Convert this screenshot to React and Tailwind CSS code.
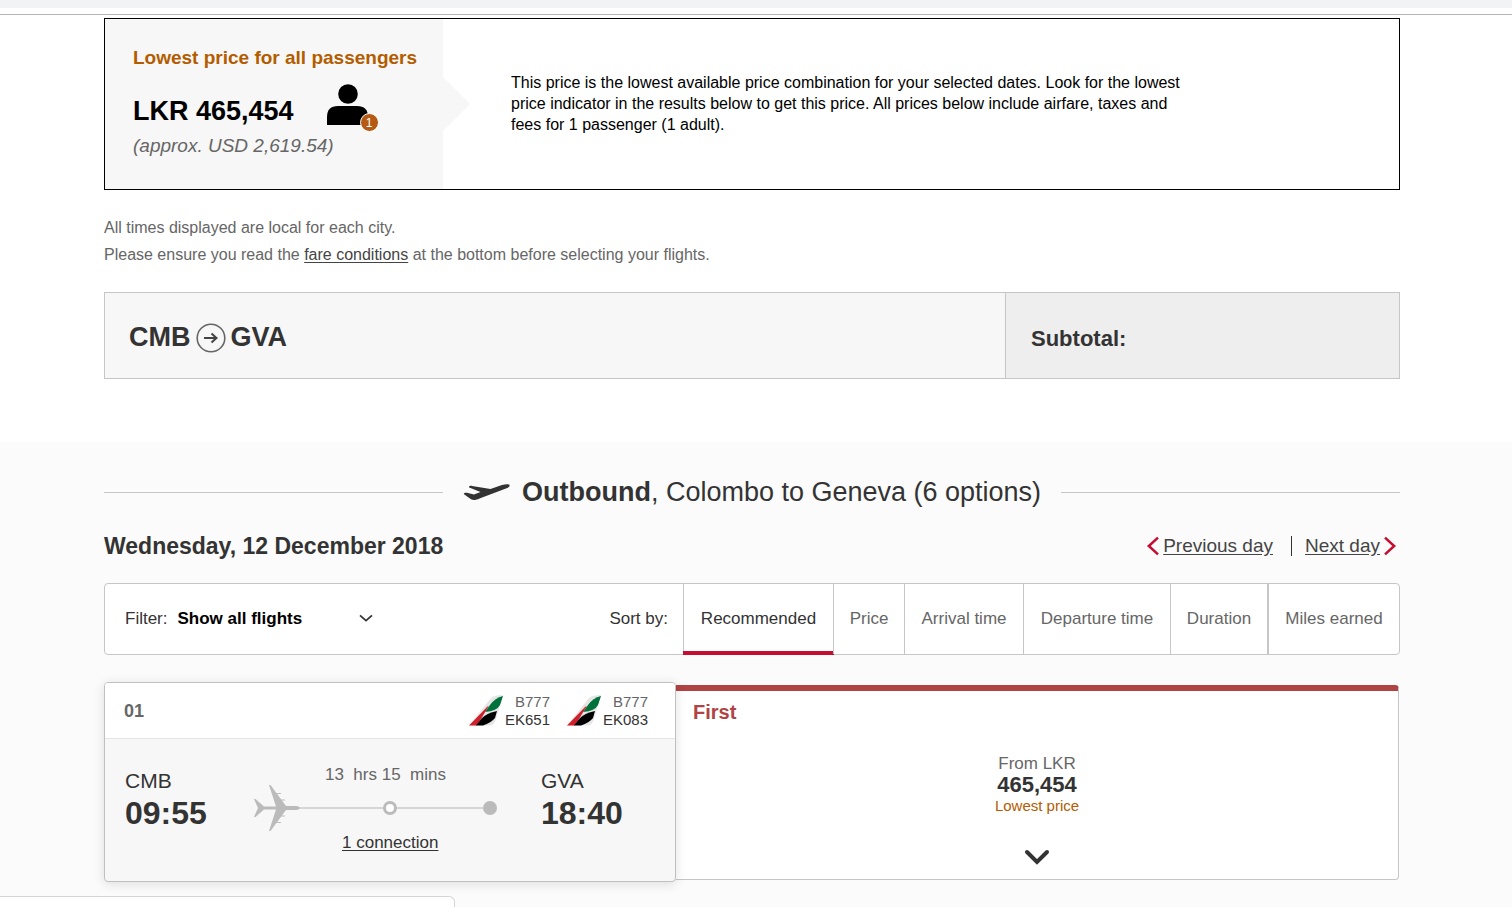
import clsx from 'clsx'

const sortOptions = ['Recommended', 'Price', 'Arrival time', 'Departure time', 'Duration', 'Miles earned']

const segments = [
    { aircraft: 'B777', number: 'EK651' },
    { aircraft: 'B777', number: 'EK083' }
]

function PassengerIcon() {
    return (
        <svg className="w-[52px] h-12" viewBox="0 0 52 48" aria-hidden="true">
            <circle cx="21" cy="10" r="9.8" fill="#000" />
            <path d="M0 41V33Q0 22 11 22H30Q41 22 41 33V41Z" fill="#000" />
        </svg>
    )
}

function CircleArrow() {
    return (
        <svg className="w-[30px] h-[30px]" viewBox="0 0 30 30" fill="none" aria-hidden="true">
            <circle cx="15" cy="15" r="13.8" stroke="#666" strokeWidth="1.6" />
            <path d="M8 15H20.5M15.5 10.5L20.5 15L15.5 19.5" stroke="#444" strokeWidth="2" />
        </svg>
    )
}

function TakeoffIcon() {
    return (
        <svg className="w-[47px] h-[18px]" viewBox="0 0 47 18" fill="#333" aria-hidden="true">
            <path d="M1 10.2C.2 9.2 2 8.4 4 8.7L11 10.5L17.5 8L6.2 3.6C5.2 2.6 7 1.6 9 1.9L27.5 5L39 .9C43 -.1 46.3 -.1 46.6 1.2C46.8 2.6 45.6 3.4 43.6 4.2L16.5 14.4C13 16 10.5 16.4 8 15.2Z" />
        </svg>
    )
}

function TailLogo() {
    return (
        <svg className="w-[34px] h-[31px]" viewBox="0 0 34 31" aria-hidden="true">
            <path d="M0 30.5L22 3Q25 0 34 0L27 24Q25 30 21 30.5Z" fill="#e6e6e6" />
            <path d="M34 1Q26 3 21 10L16 17Q28 16 31 10Z" fill="#00713a" />
            <path d="M0 30.5L18 12Q21 9.5 18 14L8 30.5Z" fill="#cf202c" />
            <path d="M7 30.5L13 23Q18 18 28 16L26 23Q22 28 14 30.5Z" fill="#000" />
        </svg>
    )
}

function PlaneIcon() {
    return (
        <svg className="w-[46px] h-[46px] shrink-0" viewBox="0 0 46 46" fill="#bbb" stroke="#bbb" aria-hidden="true">
            <path stroke="none" d="M0 14L1.5 14L10 21.4H22L15 0H16.5L32 21H42Q46 21.4 46 23Q46 24.6 42 25H32L16.5 46H15L22 24.6H10L1.5 32H0L4 23Z" />
            <path d="M22 8.5H27M26 15H31M22 37.5H27M26 31H31" strokeWidth="1.2" />
        </svg>
    )
}

function Chevron({ d, className, width = 3 }) {
    return (
        <svg className={className} viewBox="0 0 24 24" fill="none" stroke="currentColor" strokeWidth={width} aria-hidden="true">
            <path d={d} />
        </svg>
    )
}

function PriceSummary() {
    return (
        <section className="flex h-[172px] border border-black bg-white">
            <div className="relative w-[338px] shrink-0 bg-[#f7f7f7] pl-7 pt-[25px]">
                <h2 className="text-[19px] leading-7 font-bold text-[#b35c00]">Lowest price for all passengers</h2>
                <div className="mt-3 flex h-12 gap-[33px]">
                    <p className="pt-[9px] text-[27px] leading-9 font-bold">LKR 465,454</p>
                    <div className="relative">
                        <PassengerIcon />
                        <span className="absolute right-0 bottom-0 flex h-[19px] w-[19px] items-center justify-center rounded-full border border-white bg-[#b45a14] text-[12px] text-white">
                            1
                        </span>
                    </div>
                </div>
                <p className="text-[19px] leading-7 italic text-[#666]">(approx. USD 2,619.54)</p>
                <svg className="absolute top-[58px] left-full h-[54px] w-[27px]" viewBox="0 0 27 54" aria-hidden="true">
                    <path d="M0 0L27 27L0 54Z" fill="#f7f7f7" />
                </svg>
            </div>
            <p className="max-w-[750px] pt-[53px] pl-[68px] text-[16px] leading-[21px]">
                This price is the lowest available price combination for your selected dates. Look for the lowest price indicator in the results below to get this price. All prices below include airfare, taxes and fees for 1 passenger (1 adult).
            </p>
        </section>
    )
}

function RouteBar() {
    return (
        <section className="mt-6 flex h-[87px] border border-[#c6c6c6] bg-[#f7f7f7] font-bold text-[#333]">
            <h2 className="flex flex-1 items-center gap-[5px] pl-6 pt-1 text-[27px]">
                <span>CMB</span>
                <CircleArrow />
                <span>GVA</span>
            </h2>
            <div className="flex w-[394px] items-center border-l border-[#c6c6c6] bg-[#eee] pl-[25px] pt-[6px] text-[22px]">Subtotal:</div>
        </section>
    )
}

function SortBar() {
    return (
        <div className="mt-[21px] flex h-[72px] rounded-[4px] border border-[#c6c6c6] bg-white text-[#333]">
            <div className="flex flex-1 items-center pl-5 text-[17px]">
                <label htmlFor="filter">Filter:</label>
                <div className="relative ml-1.5">
                    <select id="filter" className="w-[204px] appearance-none bg-transparent pl-1 font-bold text-black">
                        <option>Show all flights</option>
                    </select>
                    <Chevron d="M3 8L12 16L21 8" width={2.6} className="pointer-events-none absolute top-1 right-1 h-4 w-4" />
                </div>
                <span className="ml-auto pr-[15px]">Sort by:</span>
            </div>
            <div className="grid grid-cols-[150px_71px_119px_147px_97px_132px] text-[17px]">
                {sortOptions.map((option, i) => (
                    <button
                        key={option}
                        className={clsx(
                            'relative border-l border-[#c6c6c6]',
                            i === 0 ? 'text-[#333]' : 'text-[#666]',
                            i === 5 && 'border-l-2'
                        )}
                    >
                        {option}
                        {i === 0 && <span className="absolute -bottom-px -left-px h-1 w-[151px] bg-[#c60c30]" />}
                    </button>
                ))}
            </div>
        </div>
    )
}

function FlightCard() {
    return (
        <article className="mt-[27px] flex items-start">
            <div className="relative h-[200px] w-[572px] shrink-0 rounded-[4px] border border-[#c0c0c0] bg-[#f7f7f7] shadow-[0_2px_12px_rgba(0,0,0,0.12)]">
                <header className="flex h-14 items-center rounded-t-[3px] border-b border-[#e4e4e4] bg-white pr-[27px] pl-[19px]">
                    <span className="flex-1 pt-0.5 text-[18px] font-bold text-[#666]">01</span>
                    <div className="flex gap-[17px]">
                        {segments.map((s) => (
                            <div key={s.number} className="flex items-center">
                                <TailLogo />
                                <p className="w-[47px] text-right text-[15px] leading-[18px] text-[#333]">
                                    <span className="text-[#666]">{s.aircraft}</span>
                                    <br />
                                    {s.number}
                                </p>
                            </div>
                        ))}
                    </div>
                </header>
                <div className="flex pt-[26px] pl-5 text-[#333]">
                    <div className="w-[129px] pt-1">
                        <p className="text-[21px] leading-6">CMB</p>
                        <p className="text-[32px] leading-10 font-bold">09:55</p>
                    </div>
                    <div className="w-[287px]">
                        <p className="pl-[71px] text-[17px] leading-5 text-[#666]">13&nbsp; hrs 15&nbsp; mins</p>
                        <div className="flex h-[46px] w-[243px] items-center">
                            <PlaneIcon />
                            <span className="h-[2px] flex-1 bg-[#d6d6d6]" />
                            <span className="h-3.5 w-3.5 rounded-full border-3 border-[#bbb] bg-white" />
                            <span className="h-[2px] w-[86px] bg-[#d6d6d6]" />
                            <span className="h-3.5 w-3.5 rounded-full bg-[#bbb]" />
                        </div>
                        <a href="#connection" className="ml-[88px] text-[17px] leading-6 underline underline-offset-2">1 connection</a>
                    </div>
                    <div className="pt-1">
                        <p className="text-[21px] leading-6">GVA</p>
                        <p className="text-[32px] leading-10 font-bold">18:40</p>
                    </div>
                </div>
            </div>
            <div className="mt-[3px] mr-px h-[195px] flex-1 rounded-r-[4px] border-t-6 border-r border-b border-[#c6c6c6] border-t-[#b04343] bg-white">
                <h3 className="pt-2 pl-[17px] text-[20px] leading-[26px] font-bold text-[#b04343]">First</h3>
                <button className="flex w-full flex-col items-center pt-7">
                    <span className="text-[17px] leading-[21px] text-[#666]">From LKR</span>
                    <span className="text-[22px] leading-[22px] font-bold text-[#333]">465,454</span>
                    <span className="text-[15px] leading-5 text-[#b35c00]">Lowest price</span>
                    <svg className="mt-8 h-[18px] w-7 text-[#333]" viewBox="0 0 28 18" fill="none" stroke="currentColor" strokeWidth="4" aria-hidden="true">
                        <path d="M4 4L14 14L24 4" strokeLinecap="round" />
                    </svg>
                </button>
            </div>
        </article>
    )
}

export default function App() {
    return (
        <div className="flex min-h-screen flex-col bg-white font-['Liberation_Sans',Arial,sans-serif] text-black">
            <div className="h-2 bg-[#f1f3f4]" />
            <div className="mt-1.5 h-px bg-[#b5b5b5]" />
            <div className="pt-[3px] pr-28 pb-[63px] pl-[104px]">
                <PriceSummary />
                <div className="mt-6 text-[16px] leading-[27px] text-[#666]">
                    <p>All times displayed are local for each city.</p>
                    <p>
                        Please ensure you read the <a href="#fare-conditions" className="text-[#444] underline underline-offset-2">fare conditions</a> at the bottom before selecting your flights.
                    </p>
                </div>
                <RouteBar />
            </div>
            <main className="flex-1 bg-[#fbfbfb] pt-[33px] pr-28 pl-[104px]">
                <div className="flex items-center gap-5">
                    <span className="h-px flex-1 bg-[#c6c6c6]" />
                    <h1 className="flex items-center gap-3 text-[27px] leading-[35px] text-[#333]">
                        <TakeoffIcon />
                        <span><b>Outbound</b>, Colombo to Geneva (6 options)</span>
                    </h1>
                    <span className="h-px flex-1 bg-[#c6c6c6]" />
                </div>
                <div className="mt-5 flex items-center justify-between text-[#333]">
                    <h2 className="text-[23px] leading-8 font-bold">Wednesday, 12 December 2018</h2>
                    <nav className="flex items-center text-[19px] text-[#444]">
                        <Chevron d="M18 2L7 12L18 22" className="h-5 w-5 text-[#c60c30]" />
                        <a href="#previous" className="underline underline-offset-2">Previous day</a>
                        <span className="mr-[13px] ml-[18px] h-5 w-px bg-[#333]" />
                        <a href="#next" className="underline underline-offset-2">Next day</a>
                        <Chevron d="M6 2L17 12L6 22" className="h-5 w-5 text-[#c60c30]" />
                    </nav>
                </div>
                <SortBar />
                <FlightCard />
            </main>
            <div className="fixed bottom-0 left-0 h-[11px] w-[455px] rounded-tr-[6px] border-t border-r border-[#d5d5d5] bg-white" />
        </div>
    )
}
